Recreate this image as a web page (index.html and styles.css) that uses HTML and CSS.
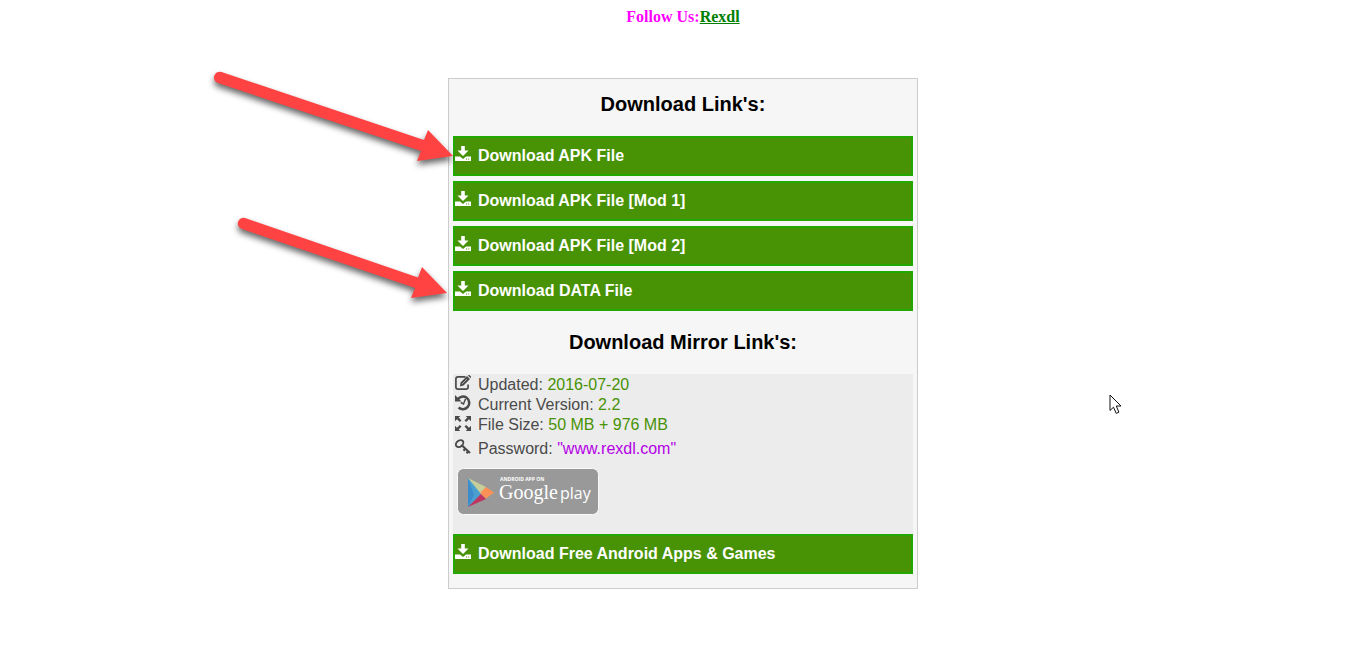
FILE: index.html
```html
<!DOCTYPE html>
<html lang="en">
<head>
<meta charset="utf-8">
<title>Download</title>
<link rel="stylesheet" href="styles.css">
</head>
<body>
<svg class="defs" aria-hidden="true">
  <symbol id="download" viewBox="0 0 16 16"><path d="M6.200 0h3.600v4.500h3.700L8 10 2.500 4.500h3.700zM0 10.500h5L8 13l3-2.500h5V15H0zM11 12.500v1h1v-1zm2.200 0v1h1v-1z" fill-rule="evenodd"/></symbol>
  <symbol id="edit" viewBox="0 0 16 16"><path d="M10.500 1.900H3Q.9 1.900.9 4v8q0 2.100 2.100 2.100h8q2.100 0 2.100-2.100V9.500" fill="none" stroke="currentColor" stroke-width="1.700"/><path d="M5.500 7.500 12 1l3 3-6.500 6.500-3.500 1zM13 .5l.5-.5h1l1.500 1.500v1l-.5.500z"/><path d="m7 9 5-5" stroke="#ececec" stroke-width=".6"/></symbol>
  <symbol id="history" viewBox="0 0 16 16"><path d="M2.600 4.500A6.300 6.300 0 1 1 3.600 12.500" fill="none" stroke="currentColor" stroke-width="2.500"/><path d="M0 0v6.500h6.500z"/><path d="M10.500 4 8.500 9 5.800 7.500" fill="none" stroke="currentColor" stroke-width="1.500"/></symbol>
  <symbol id="expand" viewBox="0 0 16 16"><path d="M0 1h5.300L3.700 2.600l2.800 2.800-1.700 1.700L2 4.300 0 6.200zM16 1v5.200l-2-1.900-2.800 2.800-1.700-1.700 2.800-2.800L10.700 1zM0 16v-5.200l2 1.900 2.800-2.800 1.700 1.700-2.800 2.800L5.300 16zM16 16h-5.300l1.600-1.600-2.800-2.800 1.700-1.700 2.800 2.800 2-1.900z"/></symbol>
  <symbol id="key" viewBox="0 0 16 16"><ellipse cx="4.600" cy="4.600" rx="4.100" ry="3" transform="rotate(-40 4.600 4.600)" fill="none" stroke="currentColor" stroke-width="1.900"/><path d="m6.500 6 8.500 8M10.500 9.500l-2 2.200M13.500 12l-2 2.200" fill="none" stroke="currentColor" stroke-width="2.100"/></symbol>
</svg>

<p class="follow">Follow Us:<a href="#">Rexdl</a></p>

<main class="panel">
  <h2 class="title">Download Link's:</h2>
  <nav class="links">
    <a class="button" href="#"><svg class="icon"><use href="#download"/></svg>Download APK File</a>
    <a class="button" href="#"><svg class="icon"><use href="#download"/></svg>Download APK File [Mod 1]</a>
    <a class="button" href="#"><svg class="icon"><use href="#download"/></svg>Download APK File [Mod 2]</a>
    <a class="button" href="#"><svg class="icon"><use href="#download"/></svg>Download DATA File</a>
  </nav>
  <h2 class="title title-mirror">Download Mirror Link's:</h2>
  <section class="info">
    <ul class="facts">
      <li class="fact"><svg class="icon"><use href="#edit"/></svg><span>Updated: <span class="value">2016-07-20</span></span></li>
      <li class="fact"><svg class="icon"><use href="#history"/></svg><span>Current Version: <span class="value">2.2</span></span></li>
      <li class="fact"><svg class="icon"><use href="#expand"/></svg><span>File Size: <span class="value">50 MB + 976 MB</span></span></li>
      <li class="fact fact-password"><svg class="icon"><use href="#key"/></svg><span>Password: <span class="password">"www.rexdl.com"</span></span></li>
    </ul>
    <a class="store" href="#" aria-label="Android app on Google play">
      <svg width="142" height="48" viewBox="0 0 142 48">
        <rect x=".5" y=".5" width="141" height="46" rx="6" fill="#999" stroke="#fafafa"/>
        <path d="M11 10v29l17-14.500z" fill="#4b9fcf"/>
        <path d="M11 10l18 9-5 7z" fill="#c6cf9a"/>
        <path d="M11 39l13-13 5 5z" fill="#c03560"/>
        <path d="M29 19l8 5.500-8 6-6-5.500z" fill="#ff9157"/>
        <path d="M11 10v29l6-12z" fill="#3a8ccb"/>
        <text class="store-small" x="43" y="13">ANDROID APP ON</text>
        <text class="store-google" x="42" y="31">Google</text>
        <text class="store-play" x="103" y="31">play</text>
      </svg>
    </a>
  </section>
  <a class="button" href="#"><svg class="icon"><use href="#download"/></svg>Download Free Android Apps &amp; Games</a>

  <svg class="arrow arrow-first" width="260" height="110" viewBox="0 0 260 110"><path d="M21.500 12 224 80l4-10 25 26-36 5 4-10L18 23a5.500 5.500 0 0 1 3.500-11z"/></svg>
  <svg class="arrow arrow-second" width="260" height="110" viewBox="0 0 260 110"><path d="M20 13l173 59.500 4-10.500 25 26-36 5 4-10L17 24a5.500 5.500 0 0 1 3-11z"/></svg>
  <svg class="pointer" width="13" height="21" viewBox="0 0 13 21"><path d="M1 1v15.500l3.500-3.300 2.700 6.200 2.700-1.200L7.300 12H12z" fill="#fff" stroke="#111"/></svg>
</main>
</body>
</html>
```
FILE: styles.css
```css
body {
  margin: 8px;
  background: #fff;
  font-family: "Liberation Sans", Arial, sans-serif;
  font-size: 16px;
  line-height: 20px;
}

.defs {
  position: absolute;
  width: 0;
  height: 0;
}

.follow {
  margin: 0 0 52px;
  color: #f0f;
  font-family: "Liberation Serif", "Times New Roman", serif;
  font-size: 16px;
  font-weight: bold;
  line-height: 18px;
  text-align: center;
}

.follow a {
  color: #008000;
}

.panel {
  position: relative;
  box-sizing: border-box;
  width: 100%;
  max-width: 470px;
  margin: 0 auto;
  padding: 13px 4px 14px;
  border: 1px solid #ccc;
  background: #f6f6f6;
}

.title {
  margin: 0 0 20px;
  color: #000;
  font-size: 20px;
  line-height: 24px;
  text-align: center;
}

.title-mirror {
  margin-top: 19px;
}

.links {
  display: grid;
  gap: 5px;
}

.button {
  display: flex;
  align-items: center;
  gap: 7px;
  padding: 8px 0;
  border: 2px solid #22a800;
  background: #489205;
  color: #fff;
  font-weight: bold;
  text-decoration: none;
}

.icon {
  flex: none;
  width: 16px;
  height: 16px;
  margin-bottom: 4px;
  fill: currentColor;
}

.info {
  padding: 1px 0 18px;
  background: #ececec;
}

.facts {
  margin: 0;
  padding: 0 0 9px 2px;
  color: #4a4a4a;
  list-style: none;
}

.fact {
  display: flex;
  align-items: center;
  gap: 7px;
}

.fact-password {
  margin-top: 4px;
}

.value {
  color: #489205;
}

.password {
  color: #b400e6;
}

.store {
  display: block;
  width: 142px;
  margin-left: 4px;
}

.store svg {
  display: block;
}

.store text {
  fill: #fff;
}

.store-small {
  font: bold 5px "Open Sans", sans-serif;
}

.store-google {
  font: 20px "Liberation Serif", serif;
}

.store-play {
  font: 16px "Open Sans", sans-serif;
}

.arrow {
  position: absolute;
  fill: #ff4343;
  filter: drop-shadow(0 4px 3px rgba(0, 0, 0, .6));
  pointer-events: none;
}

.arrow-first {
  top: -19px;
  left: -249px;
}

.arrow-second {
  top: 126px;
  left: -224px;
}

.pointer {
  position: absolute;
  top: 315px;
  left: 660px;
}
```
